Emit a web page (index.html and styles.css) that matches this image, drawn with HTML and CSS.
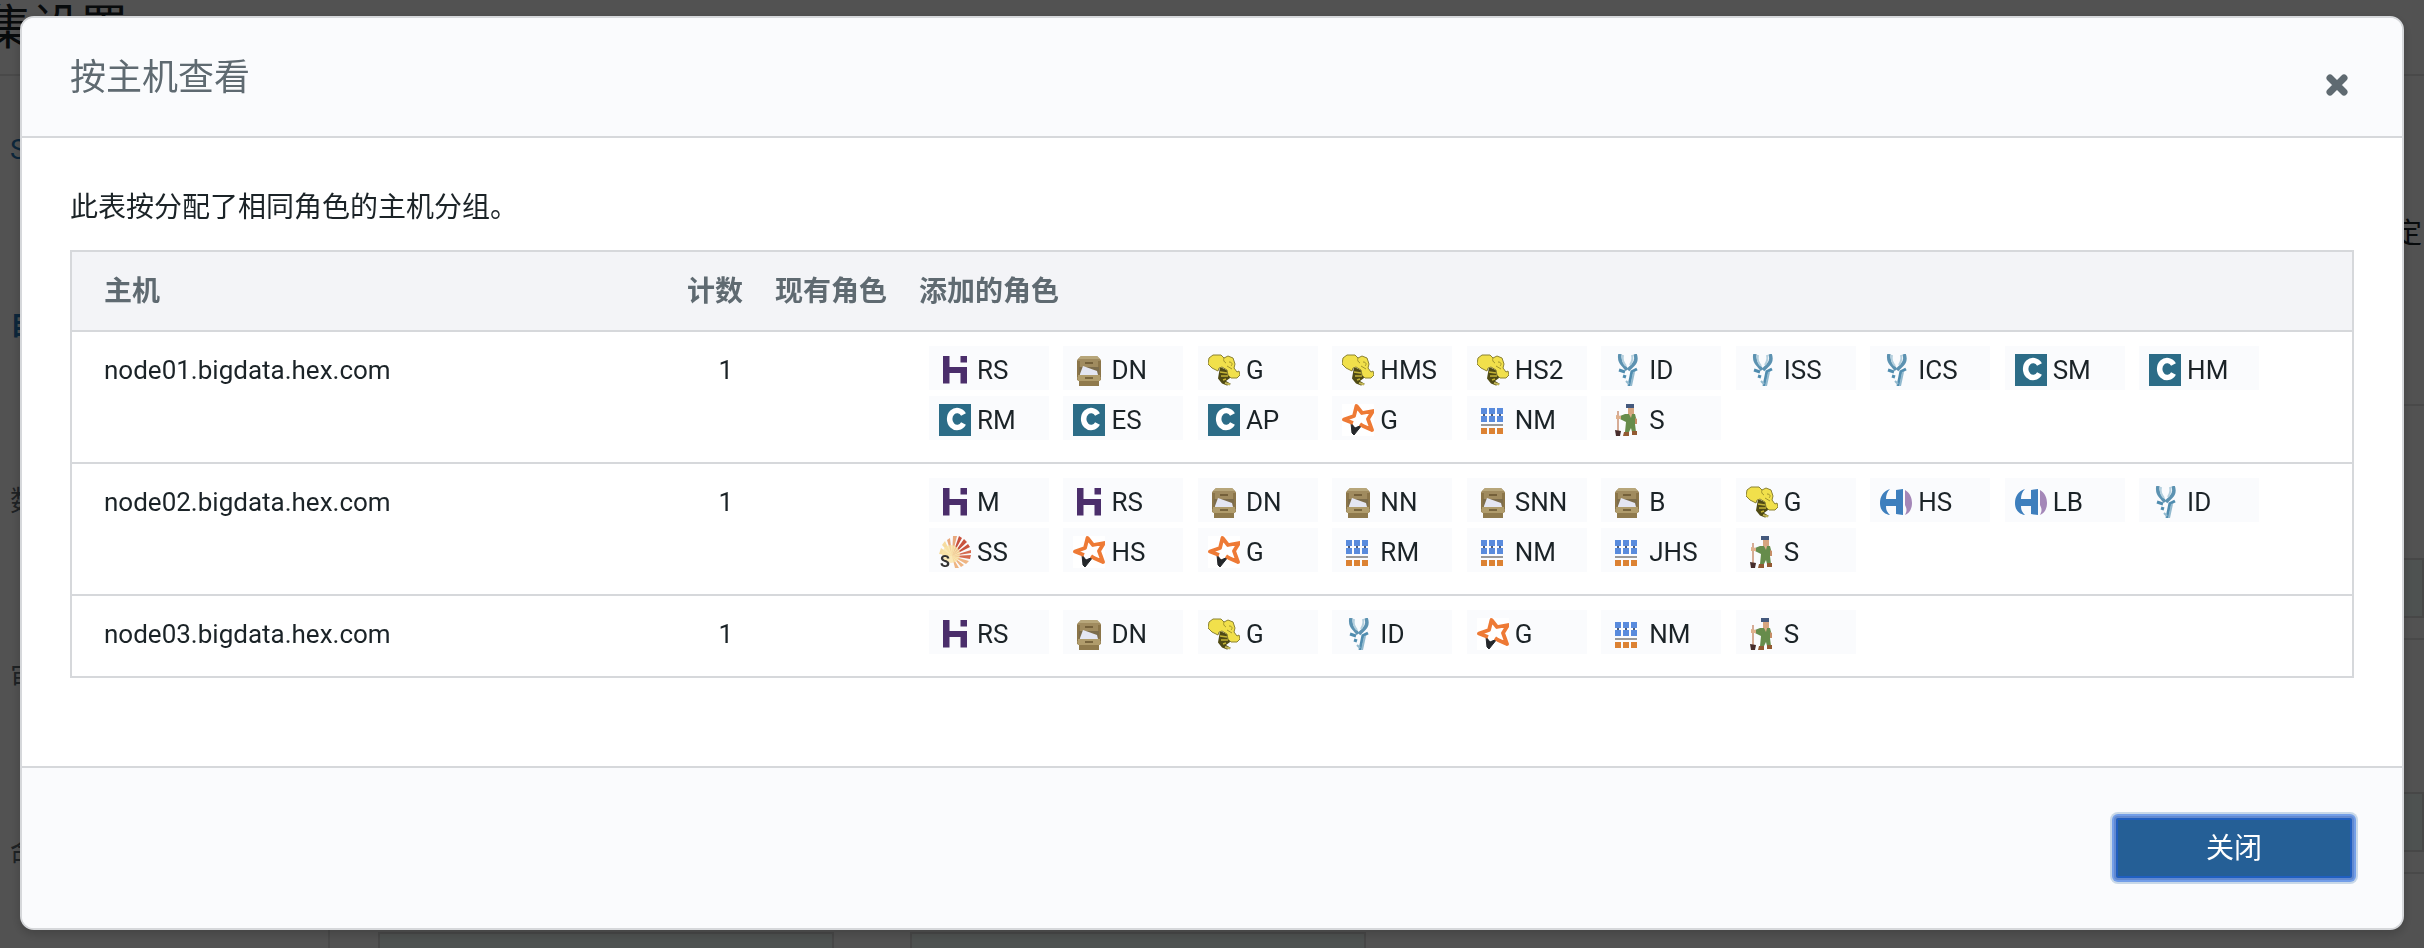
FILE: index.html
```
<!DOCTYPE html>
<html lang="zh-CN">
<head>
<meta charset="utf-8">
<meta name="viewport" content="width=device-width, initial-scale=1">
<title>按主机查看</title>
<link rel="stylesheet" href="styles.css">
</head>
<body>
<svg class="sprite" aria-hidden="true">
  <symbol id="hbase" viewBox="0 0 32 32">
    <path d="M4 2h6.500v11H28v16.500h-6.500V19h-11v10.500H4zM21.500 2H28v6.500h-6.500z" fill="#4b2e6b"/>
  </symbol>
  <symbol id="hdfs" viewBox="0 0 32 32">
    <path d="M8 2h16l4 4v20l-2 1v5H6v-5l-2-1V6z" fill="#a08b5f"/>
    <path d="M8 2h16l3 3H5z" fill="#b7a67a"/>
    <path d="M4 7h3v16H4zM25 7h3v16h-3z" fill="#8b7549"/>
    <path d="M6 13h20v7H6z" fill="#7c6c4b"/>
    <path d="M7 20l3-8 14 5 1 4H7z" fill="#e4e6f2"/>
    <path d="M5 21h22v6H5z" fill="#b09c6c"/>
    <path d="M6 27h20v5H6z" fill="#8f7a4d"/>
    <path d="M12 9h8M12 24h8" stroke="#65532f" stroke-width="1.500"/>
  </symbol>
  <symbol id="hive" viewBox="0 0 32 32">
    <path d="M12 13l9 4 1 7-4 3 5 3-4 1.500-5-2-4-5z" fill="#4f4a14"/>
    <path d="M1 4l4-3 8 0 3 3 4-2 5 2 2 6-1 4 3 4 2-1 1 4-3 3-6 0-3-3-1-5-5-3-3 1-1 3-6-3-4-4z" fill="#f1e04b" stroke="#8b8233" stroke-width="1"/>
    <path d="M16 4c-1 2 0 4 2 5M21 8c3 0 4 2 2 4M19 12l5 3" fill="none" stroke="#a2952e" stroke-width="1"/>
    <path d="M12 18l7 1M13 22l7 0M15 26l3-1" stroke="#c3b335" stroke-width="1.500"/>
    <path d="M17 29l5 1.500" stroke="#c3b757" stroke-width="2"/>
  </symbol>
  <symbol id="impala" viewBox="0 0 32 32">
    <path d="M9 0c-1 5 0 8 3 11l4 5M24 0c2 5 1 8-2 11l-5 5" fill="none" stroke="#5c92b1" stroke-width="3.500"/>
    <path d="M12 1c-1 5 0 7 3 11M21 1c1 4 0 7-2 10" fill="none" stroke="#b5d0de" stroke-width="2"/>
    <path d="M8 16l6 2M26 15l-6 3M21 17l-3 15M12 22l3 1" fill="none" stroke="#4f8caf" stroke-width="3"/>
    <path d="M23 18l-3 14M15 27l3 3" fill="none" stroke="#92b9ce" stroke-width="2"/>
  </symbol>
  <symbol id="cloudera" viewBox="0 0 32 32">
    <path d="M0 0h32v32H0z" fill="#2c6c87"/>
    <path d="M24.500 10.500A7.500 8.500 0 1 0 24.500 19.500" fill="none" stroke="#fff" stroke-width="5.500"/>
  </symbol>
  <symbol id="spark" viewBox="0 0 32 32">
    <path d="M0 0h32v32H0z" fill="#fff"/>
    <path d="M9 19l4 5 7-3-8 10-2-2z" fill="#25282b" stroke="#25282b"/>
    <path d="M11 19L2 15.500 12 12l2.500-10L20 9l11-2-5 8 4 11-9-4-3-2" fill="none" stroke="#ee7a35" stroke-width="3.800" stroke-linejoin="round"/>
  </symbol>
  <symbol id="yarn" viewBox="0 0 32 32">
    <path d="M7 8v6M15 8v6M23 8v6" stroke="#4c5b78" stroke-width="2"/>
    <path d="M4 4h6v6H4zM12 4h6v6h-6zM20 4h6v6h-6zM4 12h6v6H4zM12 12h6v6h-6zM20 12h6v6h-6z" fill="#598bdd"/>
    <path d="M4 20h22v2H4z" fill="#999"/>
    <path d="M4 24h6v6H4zM12 24h6v6h-6zM20 24h6v6h-6z" fill="#dc8233"/>
  </symbol>
  <symbol id="zookeeper" viewBox="0 0 32 32">
    <path d="M7 7v20" stroke="#d6ac96" stroke-width="2"/>
    <path d="M4 26l6 1-1 5H5z" fill="#472d2c"/>
    <path d="M17 4h6v6h-6z" fill="#d6a57f"/>
    <path d="M15 0h8v4h-8z" fill="#44597d"/>
    <path d="M14 10h10l2 8-2 2 1 8h-4l-1-4-2 4h-4l1-10-6-3v-3z" fill="#668c4b"/>
    <path d="M18 10l3 0-1 4zM5 11l5 1v3H5z" fill="#dfb08c"/>
    <path d="M24 14l2 1v5h-2z" fill="#c58d66"/>
    <path d="M13 28h5v4h-6zM21 27h5v4h-5z" fill="#925a32"/>
  </symbol>
  <symbol id="solr" viewBox="0 0 32 32">
    <path d="M13 20L0 18l2-6zM13 20L3 9l3-4z" fill="#f6dca0"/>
    <path d="M13 20L8 4l3-2zM13 20L14 0l4 0z" fill="#e8a97e"/>
    <path d="M13 20L20 0l3 2zM13 20L25 3l3 3zM13 20L29 8l2 3z" fill="#c9533e"/>
    <path d="M13 20L32 14v3zM13 20L32 19l-1 4z" fill="#d56a50"/>
    <path d="M13 20L30 25l-3 3zM13 20L25 29l-3 2zM13 20L20 32l-4 0z" fill="#eeb583"/>
    <circle cx="12" cy="18" r="9" fill="#f9e3a6" opacity=".8"/>
    <text class="solr-letter" x="1" y="31">S</text>
  </symbol>
  <symbol id="hue" viewBox="0 0 32 32">
    <path d="M10 3C3 5 0 11 0 17s3 11 10 12c-3-3-4-5-4-9h10v8l7 1V3l-7 1v9H6c0-4 1-7 4-10z" fill="#3e7fbd"/>
    <path d="M25 4c5 3 7 8 7 13s-2 10-7 12c2-4 2-6 0-10z" fill="#a487b8"/>
  </symbol>
</svg>

<div class="page" aria-hidden="true">
  <div class="page-title">集设置</div>
  <div class="page-columns">
    <div class="steps">
      <div class="step step-link">S</div>
      <div class="step step-link step-current">自</div>
      <div class="step">数</div>
      <div class="step">审</div>
      <div class="step">命</div>
    </div>
    <div class="page-main">
      <div class="intro">定</div>
      <div class="panel"><div class="slot"></div></div>
      <div class="panel"><div class="slot"></div></div>
      <div class="panel panel-split"><div class="slot"></div><div class="slot"></div></div>
    </div>
  </div>
</div>

<div class="overlay">
  <div class="modal" role="dialog" aria-modal="true" aria-labelledby="dialog-title">
    <header class="modal-header">
      <h1 class="modal-title" id="dialog-title">按主机查看</h1>
      <button class="dismiss" type="button" aria-label="关闭对话框">
        <svg viewBox="0 0 22 22" width="22" height="22" aria-hidden="true"><path d="M4 4l14 14M18 4L4 18" stroke="currentColor" stroke-width="7" stroke-linecap="round"/></svg>
      </button>
    </header>
    <div class="modal-body">
      <p class="lead">此表按分配了相同角色的主机分组。</p>
      <table class="hosts">
        <colgroup><col class="col-host"><col class="col-count"><col class="col-existing"><col></colgroup>
        <thead>
          <tr><th scope="col">主机</th><th scope="col">计数</th><th scope="col">现有角色</th><th scope="col">添加的角色</th></tr>
        </thead>
        <tbody>
          <tr>
            <td>node01.bigdata.hex.com</td><td class="count">1</td><td></td>
            <td>
              <ul class="roles">
                <li class="role"><svg class="icon"><use href="#hbase"/></svg>RS</li>
                <li class="role"><svg class="icon"><use href="#hdfs"/></svg>DN</li>
                <li class="role"><svg class="icon"><use href="#hive"/></svg>G</li>
                <li class="role"><svg class="icon"><use href="#hive"/></svg>HMS</li>
                <li class="role"><svg class="icon"><use href="#hive"/></svg>HS2</li>
                <li class="role"><svg class="icon"><use href="#impala"/></svg>ID</li>
                <li class="role"><svg class="icon"><use href="#impala"/></svg>ISS</li>
                <li class="role"><svg class="icon"><use href="#impala"/></svg>ICS</li>
                <li class="role"><svg class="icon"><use href="#cloudera"/></svg>SM</li>
                <li class="role"><svg class="icon"><use href="#cloudera"/></svg>HM</li>
                <li class="role"><svg class="icon"><use href="#cloudera"/></svg>RM</li>
                <li class="role"><svg class="icon"><use href="#cloudera"/></svg>ES</li>
                <li class="role"><svg class="icon"><use href="#cloudera"/></svg>AP</li>
                <li class="role"><svg class="icon"><use href="#spark"/></svg>G</li>
                <li class="role"><svg class="icon"><use href="#yarn"/></svg>NM</li>
                <li class="role"><svg class="icon"><use href="#zookeeper"/></svg>S</li>
              </ul>
            </td>
          </tr>
          <tr>
            <td>node02.bigdata.hex.com</td><td class="count">1</td><td></td>
            <td>
              <ul class="roles">
                <li class="role"><svg class="icon"><use href="#hbase"/></svg>M</li>
                <li class="role"><svg class="icon"><use href="#hbase"/></svg>RS</li>
                <li class="role"><svg class="icon"><use href="#hdfs"/></svg>DN</li>
                <li class="role"><svg class="icon"><use href="#hdfs"/></svg>NN</li>
                <li class="role"><svg class="icon"><use href="#hdfs"/></svg>SNN</li>
                <li class="role"><svg class="icon"><use href="#hdfs"/></svg>B</li>
                <li class="role"><svg class="icon"><use href="#hive"/></svg>G</li>
                <li class="role"><svg class="icon"><use href="#hue"/></svg>HS</li>
                <li class="role"><svg class="icon"><use href="#hue"/></svg>LB</li>
                <li class="role"><svg class="icon"><use href="#impala"/></svg>ID</li>
                <li class="role"><svg class="icon"><use href="#solr"/></svg>SS</li>
                <li class="role"><svg class="icon"><use href="#spark"/></svg>HS</li>
                <li class="role"><svg class="icon"><use href="#spark"/></svg>G</li>
                <li class="role"><svg class="icon"><use href="#yarn"/></svg>RM</li>
                <li class="role"><svg class="icon"><use href="#yarn"/></svg>NM</li>
                <li class="role"><svg class="icon"><use href="#yarn"/></svg>JHS</li>
                <li class="role"><svg class="icon"><use href="#zookeeper"/></svg>S</li>
              </ul>
            </td>
          </tr>
          <tr>
            <td>node03.bigdata.hex.com</td><td class="count">1</td><td></td>
            <td>
              <ul class="roles">
                <li class="role"><svg class="icon"><use href="#hbase"/></svg>RS</li>
                <li class="role"><svg class="icon"><use href="#hdfs"/></svg>DN</li>
                <li class="role"><svg class="icon"><use href="#hive"/></svg>G</li>
                <li class="role"><svg class="icon"><use href="#impala"/></svg>ID</li>
                <li class="role"><svg class="icon"><use href="#spark"/></svg>G</li>
                <li class="role"><svg class="icon"><use href="#yarn"/></svg>NM</li>
                <li class="role"><svg class="icon"><use href="#zookeeper"/></svg>S</li>
              </ul>
            </td>
          </tr>
        </tbody>
      </table>
    </div>
    <footer class="modal-footer">
      <button class="primary" type="button">关闭</button>
    </footer>
  </div>
</div>
</body>
</html>
```
FILE: styles.css
```
* {
  box-sizing: border-box;
}

body {
  margin: 0;
  font-family: Roboto, "Noto Sans CJK SC", sans-serif;
  font-size: 28px;
  line-height: 40px;
  color: #1b2327;
}

.sprite {
  position: absolute;
  width: 0;
  height: 0;
}

.solr-letter {
  font: bold 16px Roboto, sans-serif;
  fill: #333;
}

/* Wizard page behind the dialog */
.page {
  position: fixed;
  inset: 0;
  overflow: hidden;
  background: #fff;
}

.page-title {
  height: 76px;
  margin-left: -16px;
  border-bottom: 2px solid #e4e4e4;
  font-size: 48px;
  line-height: 56px;
}

.page-columns {
  display: grid;
  grid-template-columns: 330px 1fr;
  min-height: 100%;
}

.steps {
  display: flex;
  flex-direction: column;
  gap: 136px;
  padding: 54px 10px;
  border-right: 2px solid #e4e4e4;
}

.step {
  color: #5f6a71;
}

.step-link {
  color: #2a78b8;
}

.step-current {
  font-weight: bold;
}

.page-main {
  padding-left: 48px;
}

.intro {
  padding: 138px 2px 150px;
  text-align: right;
}

.panel {
  padding: 152px 0 20px;
  border-top: 2px solid #e4e4e4;
}

.panel-split {
  display: flex;
  gap: 76px;
  padding-top: 58px;
}

.panel-split .slot {
  width: 456px;
}

.slot {
  height: 60px;
  border: 2px solid #dedede;
  background: #f3fdfa;
}

/* Dialog */
.overlay {
  position: relative;
  min-height: 100vh;
  padding: 16px 20px;
  background: rgba(0, 0, 0, .68);
}

.modal {
  overflow: hidden;
  border: 2px solid #d6d8db;
  border-radius: 14px;
  background: #fff;
  box-shadow: 0 4px 12px rgba(0, 0, 0, .2);
}

.modal-header {
  display: flex;
  justify-content: space-between;
  align-items: flex-end;
  padding: 36px 48px 34px;
  border-bottom: 2px solid #d6d8db;
  background: #fafbfd;
}

.modal-title {
  margin: 0;
  font-size: 36px;
  font-weight: normal;
  line-height: 48px;
  color: #5f6a71;
}

.dismiss {
  display: flex;
  align-items: center;
  justify-content: center;
  width: 34px;
  height: 34px;
  padding: 0;
  border: 0;
  background: none;
  color: #5f6a71;
}

.modal-body {
  padding: 50px 48px 88px;
}

.lead {
  margin: 0 0 22px;
}

.hosts {
  width: 100%;
  table-layout: fixed;
  border: 2px solid #d6d8db;
  border-top: 0;
  border-spacing: 0;
  font-size: 26px;
}

.col-host {
  width: 599px;
}

.col-count {
  width: 88px;
}

.col-existing {
  width: 144px;
}

.hosts th,
.hosts td {
  padding: 18px 16px;
  border-top: 2px solid #d6d8db;
  text-align: left;
  vertical-align: top;
}

.hosts th {
  padding-top: 20px;
  background: #f3f4f7;
  color: #5f6a71;
  font-size: 28px;
  white-space: nowrap;
}

.hosts th:first-child,
.hosts td:first-child {
  padding-left: 32px;
}

.hosts .count {
  padding-right: 26px;
  text-align: right;
}

.hosts td:last-child {
  padding-top: 14px;
  padding-bottom: 16px;
}

.roles {
  margin: 0 0 0 10px;
  padding: 0;
  list-style: none;
}

.role {
  display: inline-flex;
  align-items: center;
  gap: 6px;
  width: 120px;
  height: 44px;
  margin: 0 8px 6px 0;
  padding: 4px 0 0 10px;
  background: #fafbfd;
  vertical-align: top;
}

.icon {
  flex: none;
  width: 32px;
  height: 32px;
}

.modal-footer {
  display: flex;
  justify-content: flex-end;
  padding: 48px;
  border-top: 2px solid #d6d8db;
  background: #fafbfd;
}

.primary {
  width: 240px;
  height: 64px;
  padding: 2px 0 0;
  border: 2px solid #6289cf;
  border-radius: 4px;
  background: #255f96;
  box-shadow: inset 0 0 0 2px #205fc0, 0 0 0 2px #739ee8, 0 0 0 4px #c8d8e8;
  color: #fff;
  font: inherit;
}
```
